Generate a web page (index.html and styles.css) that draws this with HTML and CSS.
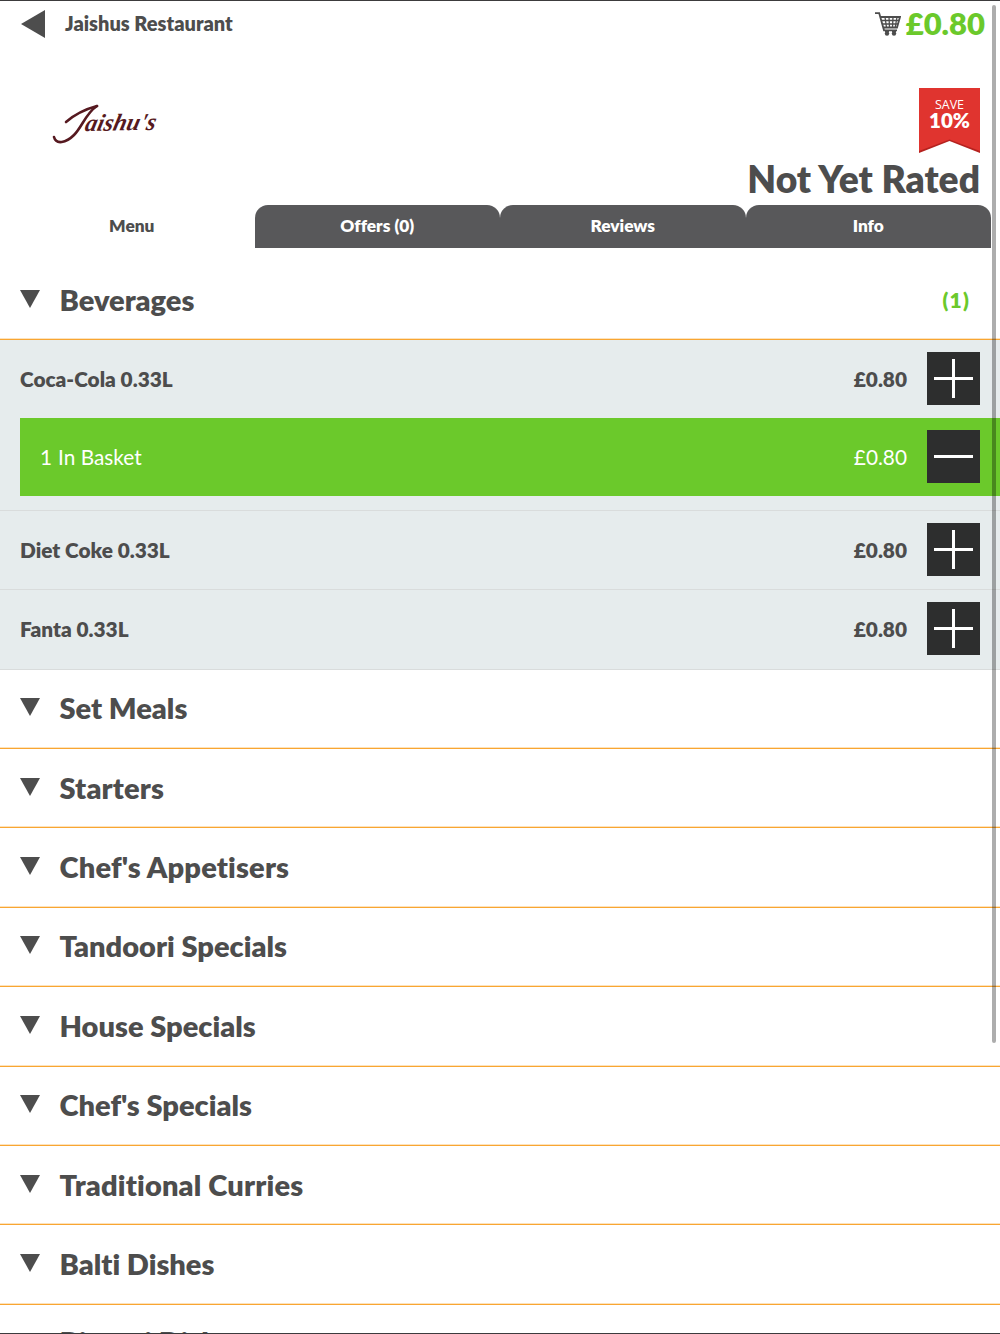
FILE: index.html
```html
<!DOCTYPE html>
<html lang="en">
<head>
    <meta charset="UTF-8">
    <meta name="viewport" content="width=device-width, initial-scale=1.0">
    <title>Jaishus Restaurant</title>
    <link rel="stylesheet" href="styles.css">
</head>
<body>
    <header class="top-bar">
        <a href="#" class="back" aria-label="Back">
            <svg width="24" height="28" viewBox="0 0 24 28"><path d="M0 14 24 0v28z"/></svg>
        </a>
        <h1 class="title">Jaishus Restaurant</h1>
        <div class="cart">
            <svg class="cart-icon" width="26" height="24" viewBox="0 0 26 24">
                <path d="M0 1.2h4.2L9 18.3h13M5 5h20l-3 10.5H8.2" fill="none" stroke="#4d4d4d" stroke-width="1.8"/>
                <path d="M6 8.5h18M7 12h16M10 5l1.5 10.5M14 5l.5 10.5M18 5l-.5 10.5M22 5l-1.8 10.5" fill="none" stroke="#4d4d4d" stroke-width="1.3"/>
                <path d="M10 18h4v2H10zM17 18h4v2h-4z"/>
                <circle cx="12" cy="21.5" r="2.2"/><circle cx="19" cy="21.5" r="2.2"/>
            </svg>
            <span class="cart-total">£0.80</span>
        </div>
    </header>

    <section class="hero">
        <svg class="logo" width="110" height="46" viewBox="0 0 110 46">
            <path d="M14 19C22 12 34 6 45 3" class="swash"/>
            <path d="M45 3C34 10 30 24 22 32C14 40 4 42 2 34" class="swash"/>
            <text x="0" y="0" class="logo-text" transform="translate(32 28) rotate(-1) skewX(-14)">aishu's</text>
        </svg>
        <div class="rating">
            <div class="ribbon">
                <svg class="ribbon-shape" width="61" height="65" viewBox="0 0 61 65">
                    <path d="M0 0h61v65L30.5 53 0 65z" fill="#b5221f"/>
                    <path d="M0 0h61v63L30.5 51.5 0 63z" fill="#e0342f"/>
                </svg>
                <span class="ribbon-save">SAVE</span>
                <span class="ribbon-value">10%</span>
            </div>
            <div class="rating-text">Not Yet Rated</div>
        </div>
    </section>

    <nav class="tabs">
        <a class="tab active">Menu</a>
        <a class="tab">Offers (0)</a>
        <a class="tab">Reviews</a>
        <a class="tab">Info</a>
    </nav>

    <main class="menu">
        <h2 class="category"><i class="arrow"></i>Beverages<span class="count">(1)</span></h2>
        <div class="item item-selected">
            <div class="item-row">
                <span class="name">Coca-Cola 0.33L</span>
                <span class="price">£0.80</span>
                <button class="btn plus" aria-label="Add"></button>
            </div>
            <div class="basket-row">
                <span class="name"><span class="qty">1</span>In Basket</span>
                <span class="price">£0.80</span>
                <button class="btn" aria-label="Remove"></button>
            </div>
        </div>
        <div class="item">
            <div class="item-row">
                <span class="name">Diet Coke 0.33L</span>
                <span class="price">£0.80</span>
                <button class="btn plus" aria-label="Add"></button>
            </div>
        </div>
        <div class="item">
            <div class="item-row">
                <span class="name">Fanta 0.33L</span>
                <span class="price">£0.80</span>
                <button class="btn plus" aria-label="Add"></button>
            </div>
        </div>
        <h2 class="category"><i class="arrow"></i>Set Meals</h2>
        <h2 class="category wide"><i class="arrow"></i>Starters</h2>
        <h2 class="category wide"><i class="arrow"></i>Chef's Appetisers</h2>
        <h2 class="category"><i class="arrow"></i>Tandoori Specials</h2>
        <h2 class="category"><i class="arrow"></i>House Specials</h2>
        <h2 class="category"><i class="arrow"></i>Chef's Specials</h2>
        <h2 class="category wide"><i class="arrow"></i>Traditional Curries</h2>
        <h2 class="category"><i class="arrow"></i>Balti Dishes</h2>
        <h2 class="category"><i class="arrow"></i>Biryani Dishes</h2>
    </main>

    <div class="scrollbar"></div>
</body>
</html>
```
FILE: styles.css
```css
* {
    box-sizing: border-box;
}

body {
    margin: 0;
    height: 1334px;
    overflow: hidden;
    position: relative;
    border-top: 1px solid #3c3b3d;
    background: #fff;
    color: #4d4d4d;
    font-family: Lato, "Liberation Sans", sans-serif;
    font-variant-ligatures: none;
}

/* bottom edge of the frame */
body::after {
    content: '';
    position: absolute;
    left: 0;
    right: 0;
    bottom: 0;
    height: 1px;
    background: #3c3b3d;
}

/* Top bar */
.top-bar {
    display: flex;
    align-items: center;
    height: 47px;
    padding: 0 15px 2px 21px;
}

.back {
    display: flex;
    fill: #4d4d4d;
}

.title {
    margin: 0 0 2px 20px;
    font-size: 20px;
    font-weight: 800;
}

.cart {
    display: flex;
    align-items: center;
    gap: 5px;
    margin-left: auto;
}

.cart-icon {
    fill: #4d4d4d;
}

.cart-total {
    margin-bottom: 1px;
    color: #6bc92b;
    font-size: 31px;
    line-height: 36px;
    font-weight: 800;
}

/* Logo and rating */
.hero {
    display: flex;
    justify-content: space-between;
    height: 157px;
    padding: 40px 20px 0 52px;
}

.logo {
    margin-top: 15px;
}

.swash {
    fill: none;
    stroke: #561920;
    stroke-width: 2.6;
    stroke-linecap: round;
}

.logo-text {
    fill: #561920;
    font-family: "Liberation Serif", serif;
    font-size: 24px;
    font-style: italic;
    font-weight: bold;
}

.rating {
    display: flex;
    flex-direction: column;
    align-items: flex-end;
}

.ribbon {
    display: flex;
    flex-direction: column;
    align-items: center;
    position: relative;
    width: 61px;
    height: 65px;
    padding-top: 9px;
    color: #fff;
}

.ribbon-shape {
    position: absolute;
    top: 0;
    left: 0;
}

.ribbon-save {
    position: relative;
    font: 12.5px/15px "Open Sans", sans-serif;
}

.ribbon-value {
    position: relative;
    font-size: 20.5px;
    line-height: 16px;
    font-weight: 800;
}

.rating-text {
    font-size: 37.2px;
    line-height: 51px;
    font-weight: 800;
    white-space: nowrap;
}

/* Tabs */
.tabs {
    display: flex;
    height: 43px;
    padding: 0 9px;
}

.tab {
    flex: 1;
    display: flex;
    align-items: center;
    justify-content: center;
    padding-bottom: 2px;
    border-radius: 13px 13px 0 0;
    background: #58585a;
    color: #fff;
    font-size: 17.3px;
    font-weight: 800;
}

.tab.active {
    background: none;
    color: #4d4d4d;
}

/* Menu list */
.menu {
    padding-top: 13px;
}

.category {
    display: flex;
    align-items: center;
    height: 79.4px;
    margin: 0;
    padding: 0 30px 2px 20px;
    border-bottom: 1px solid #f9a632;
    box-shadow: inset 0 -1px #fde3bd;
    font-size: 29px;
    font-weight: 800;
}

.category.wide {
    letter-spacing: 0.17px;
}

.arrow {
    width: 0;
    margin: -1px 19.5px 0 0;
    border: 10.3px solid transparent;
    border-top: 18px solid #4d4d4d;
    border-bottom: 0;
}

.category:last-child {
    padding-bottom: 4px;
}

.category:last-child .arrow {
    margin-top: 4px;
}

.count {
    margin-left: auto;
    color: #6bc92b;
    font-size: 21px;
    letter-spacing: 1.2px;
}

.item {
    height: 79.4px;
    border-bottom: 1px solid #d9dcdc;
    background: #e6eced;
    font-size: 20.8px;
}

.item-selected {
    height: 170.4px;
}

.item-row,
.basket-row {
    display: flex;
    align-items: center;
    height: 78px;
    padding: 0 20px;
    font-weight: 800;
}

.basket-row {
    margin-left: 20px;
    background: #6bc92b;
    color: #fff;
    font-weight: 400;
}

.name,
.price {
    margin-bottom: 1px;
}

.qty {
    margin-right: 6px;
}

.price {
    margin-left: auto;
    margin-right: 20px;
}

.btn {
    width: 53px;
    height: 53px;
    margin-bottom: 1px;
    padding: 0;
    border: 0;
    background: linear-gradient(#fff, #fff) center / 39px 3px no-repeat #2d2e2e;
}

.btn.plus {
    background: linear-gradient(#fff, #fff) center / 39px 3px no-repeat,
        linear-gradient(#fff, #fff) center / 3px 39px no-repeat #2d2e2e;
}

.scrollbar {
    position: absolute;
    top: 4px;
    right: 4px;
    width: 4px;
    height: 1038px;
    border-radius: 2px;
    background: rgba(0, 0, 0, 0.32);
}
```
